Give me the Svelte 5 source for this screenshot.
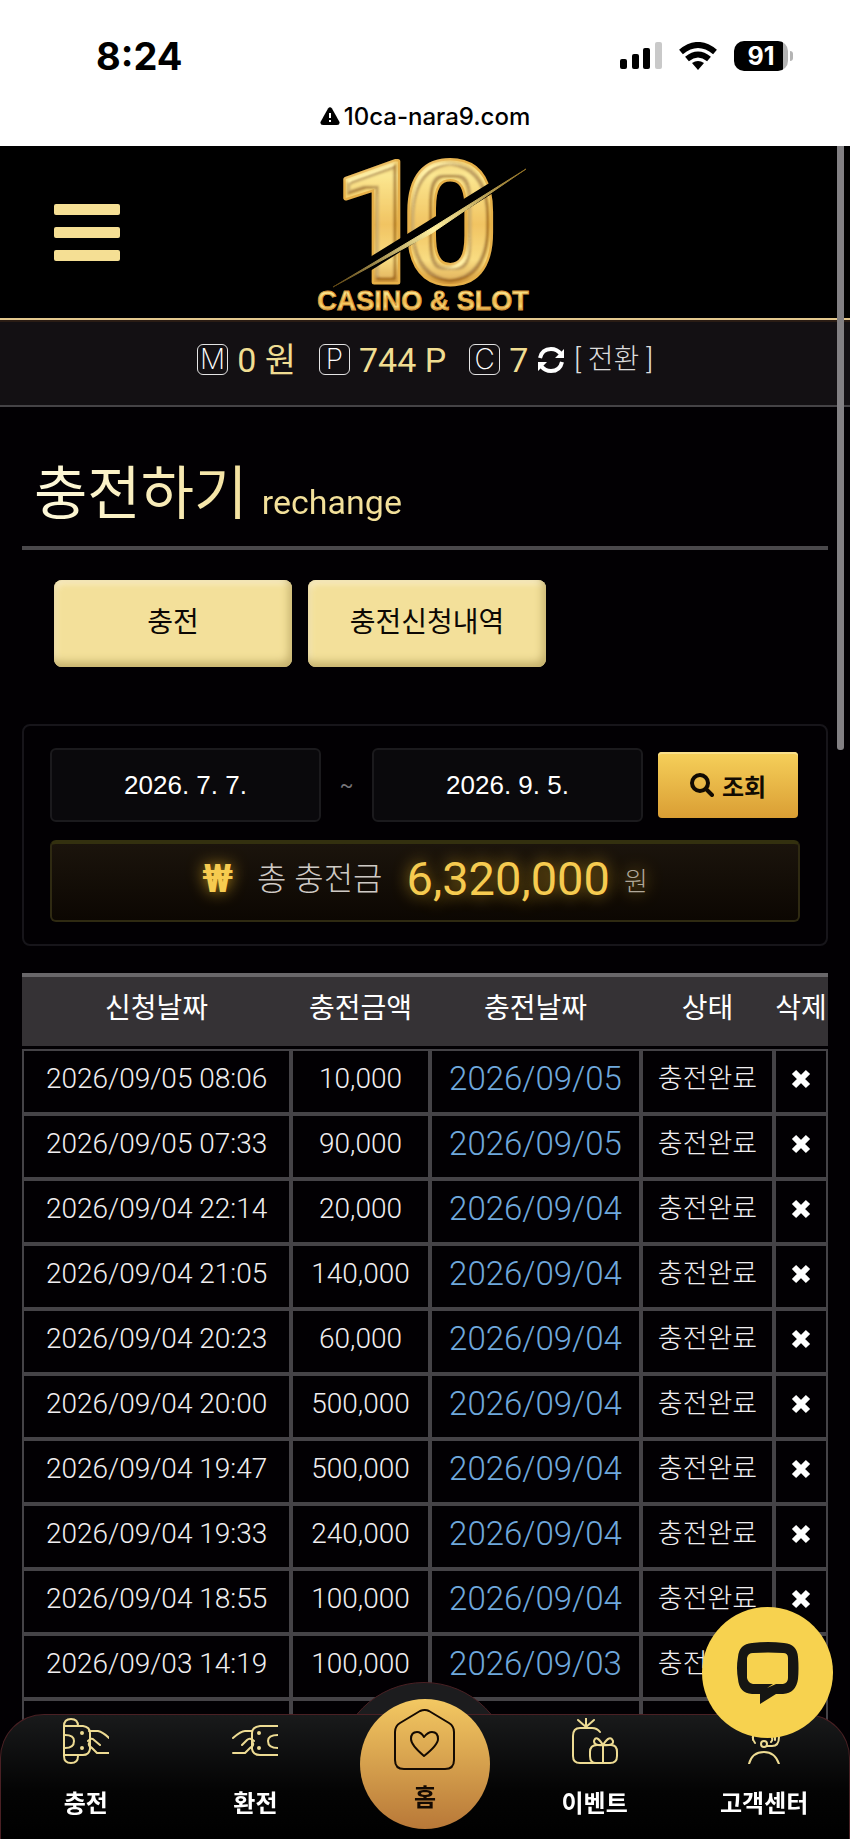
<script lang="ts">
    let startDate = $state("2026. 7. 7.");
    let endDate = $state("2026. 9. 5.");

    const rows = [
        ["2026/09/05 08:06", "10,000"],
        ["2026/09/05 07:33", "90,000"],
        ["2026/09/04 22:14", "20,000"],
        ["2026/09/04 21:05", "140,000"],
        ["2026/09/04 20:23", "60,000"],
        ["2026/09/04 20:00", "500,000"],
        ["2026/09/04 19:47", "500,000"],
        ["2026/09/04 19:33", "240,000"],
        ["2026/09/04 18:55", "100,000"],
        ["2026/09/03 14:19", "100,000"],
    ];
</script>

<div class="page">
    <div class="statusBar">
        <div class="statusTop">
            <span class="time">8:24</span>
            <div class="indicators">
                <svg width="42" height="28" viewBox="0 0 42 28" aria-hidden="true">
                    <rect x="0" y="17" width="7" height="10" rx="2" />
                    <rect x="12" y="12" width="7" height="15" rx="2" />
                    <rect x="23" y="6" width="7" height="21" rx="2" />
                    <rect x="35" y="0" width="7" height="27" rx="2" fill="#c9c9c9" />
                </svg>
                <svg width="38" height="28" viewBox="0 0 38 28" aria-hidden="true">
                    <g fill="none" stroke="#000" stroke-width="6">
                        <path d="M2 10Q19 -4 36 10" />
                        <path d="M8 17Q19 8 30 17" />
                    </g>
                    <path d="M13 21Q19 17 25 21L19 28Z" />
                </svg>
                <div class="battery">91</div>
            </div>
        </div>
        <div class="url">
            <svg width="20" height="18" viewBox="0 0 20 18" aria-hidden="true">
                <path d="M8 1.5Q10 -1 12 1.5L19.500 15Q20 18 17 18H3Q0 18 .5 15Z" />
                <path d="M10 6V11M10 13V15" stroke="#fff" stroke-width="2" />
            </svg>
            <span>10ca-nara9.com</span>
        </div>
    </div>

    <header>
        <button class="menu" aria-label="메뉴">
            <i></i><i></i><i></i>
        </button>
        <a class="logo" href="#home" aria-label="10 CASINO & SLOT">
            <svg width="230" height="172" viewBox="0 0 230 172">
                <defs>
                    <linearGradient id="gold" x1="0" y1="0" x2="0" y2="1">
                        <stop offset="0" stop-color="#d99a34" />
                        <stop offset=".25" stop-color="#fbe58c" />
                        <stop offset=".5" stop-color="#eeb94c" />
                        <stop offset=".68" stop-color="#f8d878" />
                        <stop offset=".85" stop-color="#c98224" />
                        <stop offset="1" stop-color="#a05c10" />
                    </linearGradient>
                    <linearGradient id="streak" x1="0" y1="1" x2="1" y2="0">
                        <stop offset="0" stop-color="#5c4310" />
                        <stop offset=".5" stop-color="#fff0a0" />
                        <stop offset="1" stop-color="#8a6a20" />
                    </linearGradient>
                    <!-- dark inner groove plus a highlight along the bevel -->
                    <filter id="bevel" x="-10%" y="-10%" width="120%" height="120%">
                        <feMorphology in="SourceAlpha" operator="erode" radius="4" result="inner" />
                        <feMorphology in="SourceAlpha" operator="erode" radius="7" result="core" />
                        <feComposite in="inner" in2="core" operator="out" result="ring" />
                        <feGaussianBlur in="ring" stdDeviation="1" result="softRing" />
                        <feFlood flood-color="#8a4c0a" flood-opacity=".75" />
                        <feComposite in2="softRing" operator="in" result="groove" />
                        <feGaussianBlur in="SourceAlpha" stdDeviation="3" result="height" />
                        <feSpecularLighting in="height" surfaceScale="5" specularConstant="1" specularExponent="18" lighting-color="#fff0a8" result="light">
                            <feDistantLight azimuth="235" elevation="40" />
                        </feSpecularLighting>
                        <feComposite in="light" in2="SourceAlpha" operator="in" result="shine" />
                        <feMerge>
                            <feMergeNode in="SourceGraphic" />
                            <feMergeNode in="groove" />
                            <feMergeNode in="shine" />
                        </feMerge>
                    </filter>
                </defs>
                <text class="numeral" x="22 92" y="136" filter="url(#bevel)">10</text>
                <path d="M18 140L218 16L213 25L24 145Z" fill="#000" stroke="#000" stroke-width="5" />
                <path d="M23 141L120 83L216 23L122 87Z" fill="url(#streak)" stroke="url(#streak)" />
                <text class="wordmark" x="113" y="164" text-anchor="middle">CASINO &amp; SLOT</text>
            </svg>
        </a>
    </header>

    <div class="wallet">
        <span class="badge">M</span>
        <b>0 원</b>
        <span class="badge spaced">P</span>
        <b>744 P</b>
        <span class="badge spaced">C</span>
        <b>7</b>
        <svg class="refresh" width="28" height="28" viewBox="0 0 28 28" aria-hidden="true">
            <path d="M3 12Q5 3 14 3Q20 3 24 8M25 16Q23 25 14 25Q8 25 4 20" />
            <path class="tips" d="M27 3V12H18ZM1 25V16H10Z" />
        </svg>
        <button class="convert">[ 전환 ]</button>
    </div>

    <main>
        <h1>충전하기 <small>rechange</small></h1>

        <div class="tabs">
            <button>충전</button>
            <button>충전신청내역</button>
        </div>

        <section class="filter">
            <div class="range">
                <input type="text" aria-label="시작일" bind:value={startDate} />
                <span>~</span>
                <input type="text" aria-label="종료일" bind:value={endDate} />
                <button>
                    <svg width="24" height="24" viewBox="0 0 24 24" aria-hidden="true">
                        <circle cx="10" cy="10" r="8" />
                        <path d="M16 16L22 22" />
                    </svg>
                    조회
                </button>
            </div>
            <div class="total">
                <span class="won">₩</span>
                <span class="label">총 충전금</span>
                <strong>6,320,000</strong>
                <span class="unit">원</span>
            </div>
        </section>

        <table>
            <colgroup>
                <col class="colRequested" />
                <col class="colAmount" />
                <col class="colCharged" />
                <col class="colStatus" />
                <col class="colDelete" />
            </colgroup>
            <thead>
                <tr>
                    <th>신청날짜</th>
                    <th>충전금액</th>
                    <th>충전날짜</th>
                    <th>상태</th>
                    <th>삭제</th>
                </tr>
            </thead>
            <tbody>
                {#each rows as [requested, amount]}
                    <tr>
                        <td>{requested}</td>
                        <td>{amount}</td>
                        <td class="charged">{requested.slice(0, 10)}</td>
                        <td class="state">충전완료</td>
                        <td>
                            <button class="remove" aria-label="삭제">
                                <svg width="20" height="20" viewBox="0 0 20 20">
                                    <path d="M3 3L17 17M17 3L3 17" />
                                </svg>
                            </button>
                        </td>
                    </tr>
                {/each}
                <tr><td></td><td></td><td></td><td></td><td></td></tr>
            </tbody>
        </table>
    </main>

    <div class="scrollbar"></div>

    <nav>
        <div class="bump"></div>
        <div class="bar">
            <a href="#charge">
                <svg width="46" height="46" viewBox="0 0 46 46">
                    <path d="M1 8Q1 1 8 1Q15 1 15 8M1 38Q1 45 8 45Q15 45 15 38M1 8V38M1 8H20Q27 9 27 15V31Q26 37 20 37H1M2 17Q11 17 11 23Q11 30 2 30" />
                    <path d="M26 13H35Q40 14 46 20M25 23Q29 19 31 22L37 27M26 25Q25 28 29 30L34 35H46" />
                    <circle cx="19" cy="15" r="1" /><circle cx="19" cy="30" r="1" />
                </svg>
                충전
            </a>
            <a href="#exchange">
                <svg width="46" height="46" viewBox="0 0 46 46">
                    <path d="M46 8H28Q20 9 20 15V31Q21 37 28 37H46M46 17Q36 17 36 23Q36 30 46 30" />
                    <path d="M20 13H13Q9 13 1 20M22 23Q18 19 15 22L10 27M21 25Q22 28 18 30L13 35H1" />
                    <circle cx="27" cy="15" r="1" /><circle cx="27" cy="30" r="1" />
                </svg>
                환전
            </a>
            <a class="home" href="#home">
                <svg width="62" height="62" viewBox="0 0 62 62">
                    <path d="M26 2Q31 0 35 2L55 14Q60 17 60 23V51Q60 60 51 60H10Q1 60 1 51V23Q1 17 6 14Z" />
                    <path d="M30 47Q17 36 17 30Q17 23 23 23Q27 23 30 28Q34 23 38 23Q44 23 44 30Q44 36 30 47Z" />
                </svg>
                홈
            </a>
            <a href="#event">
                <svg width="46" height="46" viewBox="0 0 46 46">
                    <path d="M14 0V9M6 2L14 9L22 2M28 14Q25 10 20 10H8Q1 10 1 18V38Q1 45 8 45H38Q45 45 45 38V34Q45 27 39 27H25Q18 27 18 34V38Q18 45 24 45M31 27V45" />
                    <path d="M31 27Q22 28 22 23Q24 16 31 27Q38 16 41 23Q42 28 31 27" />
                </svg>
                이벤트
            </a>
            <a href="#support">
                <svg width="46" height="46" viewBox="0 0 46 46">
                    <path d="M12 22V12Q13 2 23 2Q34 2 34 12V22M12 18Q11 21 14 25M38 19Q38 28 31 28H26M31 20Q32 22 30 24M8 46Q11 34 23 34Q34 34 38 46" />
                    <circle cx="23" cy="26" r="3" />
                </svg>
                고객센터
            </a>
        </div>
    </nav>

    <button class="chat" aria-label="채팅 상담">
        <svg width="62" height="62" viewBox="0 0 62 62">
            <path fill-rule="evenodd" d="M15 1Q31 -1 47 1Q60 2 61 15Q62 26 61 37Q59 51 46 52H39L23 62V42H36L30 46L39 42H46Q51 41 51 36V16Q51 11 46 11Q31 10 16 11Q11 11 10 16V36Q11 41 16 42H23V52H15Q2 51 1 37Q-1 26 1 15Q2 2 15 1Z" />
        </svg>
    </button>
</div>

<style>
    :global(body) {
        margin: 0;
        background: #020003;
    }

    .page {
        position: relative;
        min-height: 100vh;
        overflow: hidden;
        color: #fff;
        font-family: Roboto, "Noto Sans CJK KR", sans-serif;
    }

    button {
        padding: 0;
        border: none;
        background: none;
        color: inherit;
        font: inherit;
        cursor: pointer;
    }

    a {
        color: inherit;
        text-decoration: none;
    }

    svg {
        display: block;
        flex: none;
    }

    .statusBar {
        height: 146px;
        box-sizing: border-box;
        padding-top: 36px;
        background: #fff;
        color: #000;
        font-family: Inter, sans-serif;
    }

    .statusTop {
        display: flex;
        align-items: center;
        justify-content: space-between;
        height: 40px;
        padding: 0 62px 0 96px;
    }

    .time {
        font-size: 38px;
        font-weight: 700;
    }

    .indicators {
        display: flex;
        align-items: center;
        gap: 17px;
    }

    .battery {
        position: relative;
        width: 54px;
        height: 30px;
        border-radius: 10px;
        background: linear-gradient(90deg, #000 91%, #b4b4b4 91%);
        color: #fff;
        font-size: 25px;
        font-weight: 700;
        line-height: 30px;
        text-align: center;
    }

    .battery::after {
        content: "";
        position: absolute;
        left: 56px;
        top: 10px;
        width: 3px;
        height: 10px;
        border-radius: 0 3px 3px 0;
        background: #b4b4b4;
    }

    .url {
        display: flex;
        align-items: center;
        justify-content: center;
        gap: 4px;
        height: 32px;
        margin-top: 24px;
        font-size: 24px;
        font-weight: 500;
    }

    header {
        display: grid;
        grid-template-columns: 1fr auto 1fr;
        align-items: center;
        height: 172px;
        border-bottom: 2px solid #e3c88e;
        background: #000;
    }

    .menu {
        display: flex;
        flex-direction: column;
        gap: 12px;
        width: 66px;
        margin: 0 0 0 54px;
    }

    .menu i {
        height: 11px;
        border-radius: 2px;
        background: #f5df94;
    }

    .logo svg {
        overflow: visible;
    }

    .numeral {
        font-family: Roboto, sans-serif;
        font-size: 168px;
        font-weight: 700;
        fill: url(#gold);
        stroke: #e6b04a;
        stroke-width: 5px;
        stroke-linejoin: round;
        paint-order: stroke;
    }

    .wordmark {
        font-family: "Liberation Sans", sans-serif;
        font-size: 27px;
        font-weight: 700;
        fill: url(#gold);
        stroke: #d8973a;
        stroke-width: 1px;
    }

    .wallet {
        display: flex;
        align-items: center;
        justify-content: center;
        gap: 9px;
        height: 87px;
        box-sizing: border-box;
        padding-bottom: 8px;
        border-top: 2px solid #2a1c14;
        border-bottom: 2px solid #454346;
        background: #131013;
        font-size: 34px;
        line-height: 40px;
    }

    .wallet b {
        color: #f0dd92;
        font-weight: 400;
    }

    .badge {
        width: 29px;
        height: 29px;
        border: 1px solid #e4e4e4;
        border-radius: 6px;
        font-family: Inter, sans-serif;
        font-size: 28px;
        font-weight: 200;
        line-height: 29px;
        text-align: center;
    }

    .spaced {
        margin-left: 14px;
    }

    .refresh {
        fill: none;
        stroke: #fff;
        stroke-width: 4px;
    }

    .refresh .tips {
        fill: #fff;
        stroke: none;
    }

    .convert {
        color: #dcdcdc;
        font-size: 28px;
        font-weight: 300;
    }

    main {
        padding: 0 22px;
    }

    h1 {
        margin: 0;
        padding: 45px 12px 2px;
        border-bottom: 4px solid #4a484b;
        color: #f3e3a4;
        background: linear-gradient(90deg, #fffbe0, #f3e09a 240px);
        background-clip: text;
        -webkit-text-fill-color: transparent;
        font-size: 58px;
        font-weight: 400;
        line-height: 84px;
        border-image: linear-gradient(#4a484b, #4a484b) 1;
    }

    h1 small {
        font-size: 34px;
    }

    .tabs {
        display: flex;
        gap: 16px;
        padding: 30px 32px 0;
    }

    .tabs button {
        width: 238px;
        height: 87px;
        padding-bottom: 8px;
        border-radius: 8px;
        background: #f3e09a;
        box-shadow:
            inset -3px -5px 8px #c4b06c,
            inset 2px 4px 6px #f8ecc4;
        color: #0c0804;
        font-size: 28px;
        font-weight: 400;
    }

    .filter {
        margin-top: 57px;
        padding: 22px 26px;
        border: 2px solid #17151a;
        border-radius: 8px;
    }

    .range {
        display: flex;
        align-items: center;
    }

    .range input {
        flex: 1;
        min-width: 0;
        height: 74px;
        box-sizing: border-box;
        border: 2px solid #1b1a1d;
        border-radius: 6px;
        background: #0a090c;
        color: #fff;
        font-family: "Liberation Sans", sans-serif;
        font-size: 26px;
        text-align: center;
    }

    .range span {
        width: 51px;
        color: #77757a;
        font-size: 20px;
        text-align: center;
    }

    .range button {
        display: flex;
        align-items: center;
        justify-content: center;
        gap: 8px;
        width: 140px;
        height: 66px;
        margin: 0 2px 0 15px;
        border-radius: 4px;
        background: linear-gradient(#f6d05a, #da9e34);
        box-shadow: inset 0 2px #f9df8a;
        color: #120b02;
        font-size: 24px;
        font-weight: 700;
    }

    .range svg {
        fill: none;
        stroke: #120b02;
        stroke-width: 4px;
        stroke-linecap: round;
    }

    .total {
        display: flex;
        align-items: center;
        justify-content: center;
        height: 82px;
        box-sizing: border-box;
        margin-top: 18px;
        padding-bottom: 6px;
        border: 2px solid #2f2a12;
        border-top: 4px solid #33300f;
        border-radius: 6px;
        background: linear-gradient(#1b140c, #0c0702);
        line-height: 48px;
    }

    .won,
    .total strong {
        color: #f6cb50;
        text-shadow: 0 0 16px #b48a1c;
    }

    .won {
        font-size: 38px;
        font-weight: 700;
    }

    .label {
        margin: 0 24px;
        color: #cfcac5;
        font-size: 32px;
        font-weight: 300;
    }

    .total strong {
        font-size: 47px;
        font-weight: 400;
    }

    .unit {
        margin: 6px 0 0 14px;
        color: #b0a89a;
        font-size: 26px;
        font-weight: 300;
        text-shadow: 0 0 16px #b48a1c;
    }

    table {
        width: 100%;
        margin-top: 27px;
        table-layout: fixed;
        border-collapse: separate;
        border-spacing: 0;
        text-align: center;
    }

    .colRequested {
        width: 33.4%;
    }

    .colAmount {
        width: 17.2%;
    }

    .colCharged {
        width: 26.2%;
    }

    .colDelete {
        width: 6.7%;
    }

    th,
    td {
        box-sizing: border-box;
        padding: 0 0 6px;
        white-space: nowrap;
        line-height: 40px;
    }

    th {
        height: 76px;
        border-top: 4px solid #69676a;
        border-bottom: 3px solid #020003;
        background: #353235;
        font-size: 28px;
        font-weight: 400;
    }

    td {
        height: 65px;
        border: 2px solid #454347;
        color: #f0eef0;
        font-size: 28px;
        font-weight: 300;
    }

    td.charged {
        color: #6fa8dc;
        font-size: 33px;
    }

    td.state {
        font-size: 27px;
    }

    .remove {
        display: block;
        margin: 0 auto;
    }

    .remove path {
        stroke: #fff;
        stroke-width: 6px;
    }

    .scrollbar {
        position: absolute;
        top: 146px;
        right: 6px;
        width: 7px;
        height: 604px;
        border-radius: 0 0 3px 3px;
        background: #828083;
    }

    nav {
        position: fixed;
        right: 0;
        bottom: 0;
        left: 0;
    }

    .bump {
        position: absolute;
        top: -32px;
        left: 50%;
        width: 174px;
        height: 174px;
        box-sizing: border-box;
        margin-left: -88px;
        border: 1px solid #4a2024;
        border-radius: 50%;
        background: #1c1c1e;
    }

    .bar {
        position: relative;
        display: grid;
        grid-template-columns: repeat(5, 1fr);
        height: 125px;
        box-sizing: border-box;
        border: 1px solid #4a2024;
        border-bottom: none;
        border-radius: 44px 44px 0 0;
        background: linear-gradient(#191a1b, #040404 60%, #000);
    }

    .bar a {
        display: flex;
        flex-direction: column;
        align-items: center;
        gap: 23px;
        padding-top: 3px;
        font-size: 24px;
        font-weight: 700;
        line-height: 34px;
    }

    .bar svg {
        fill: none;
        stroke: #eddb93;
        stroke-width: 2px;
        stroke-linecap: round;
        stroke-linejoin: round;
    }

    .bar .home {
        gap: 10px;
        width: 130px;
        height: 130px;
        box-sizing: border-box;
        margin: -16px auto 0;
        padding-top: 10px;
        border-radius: 50%;
        background: linear-gradient(#f3c862, #b87838);
        color: #140a02;
    }

    .bar .home svg {
        stroke: #140a02;
    }

    .chat {
        position: fixed;
        right: 17px;
        bottom: 101px;
        display: flex;
        align-items: center;
        justify-content: center;
        width: 131px;
        height: 131px;
        border-radius: 50%;
        background: #f7d24f;
    }

    .chat path {
        fill: #161613;
    }
</style>
